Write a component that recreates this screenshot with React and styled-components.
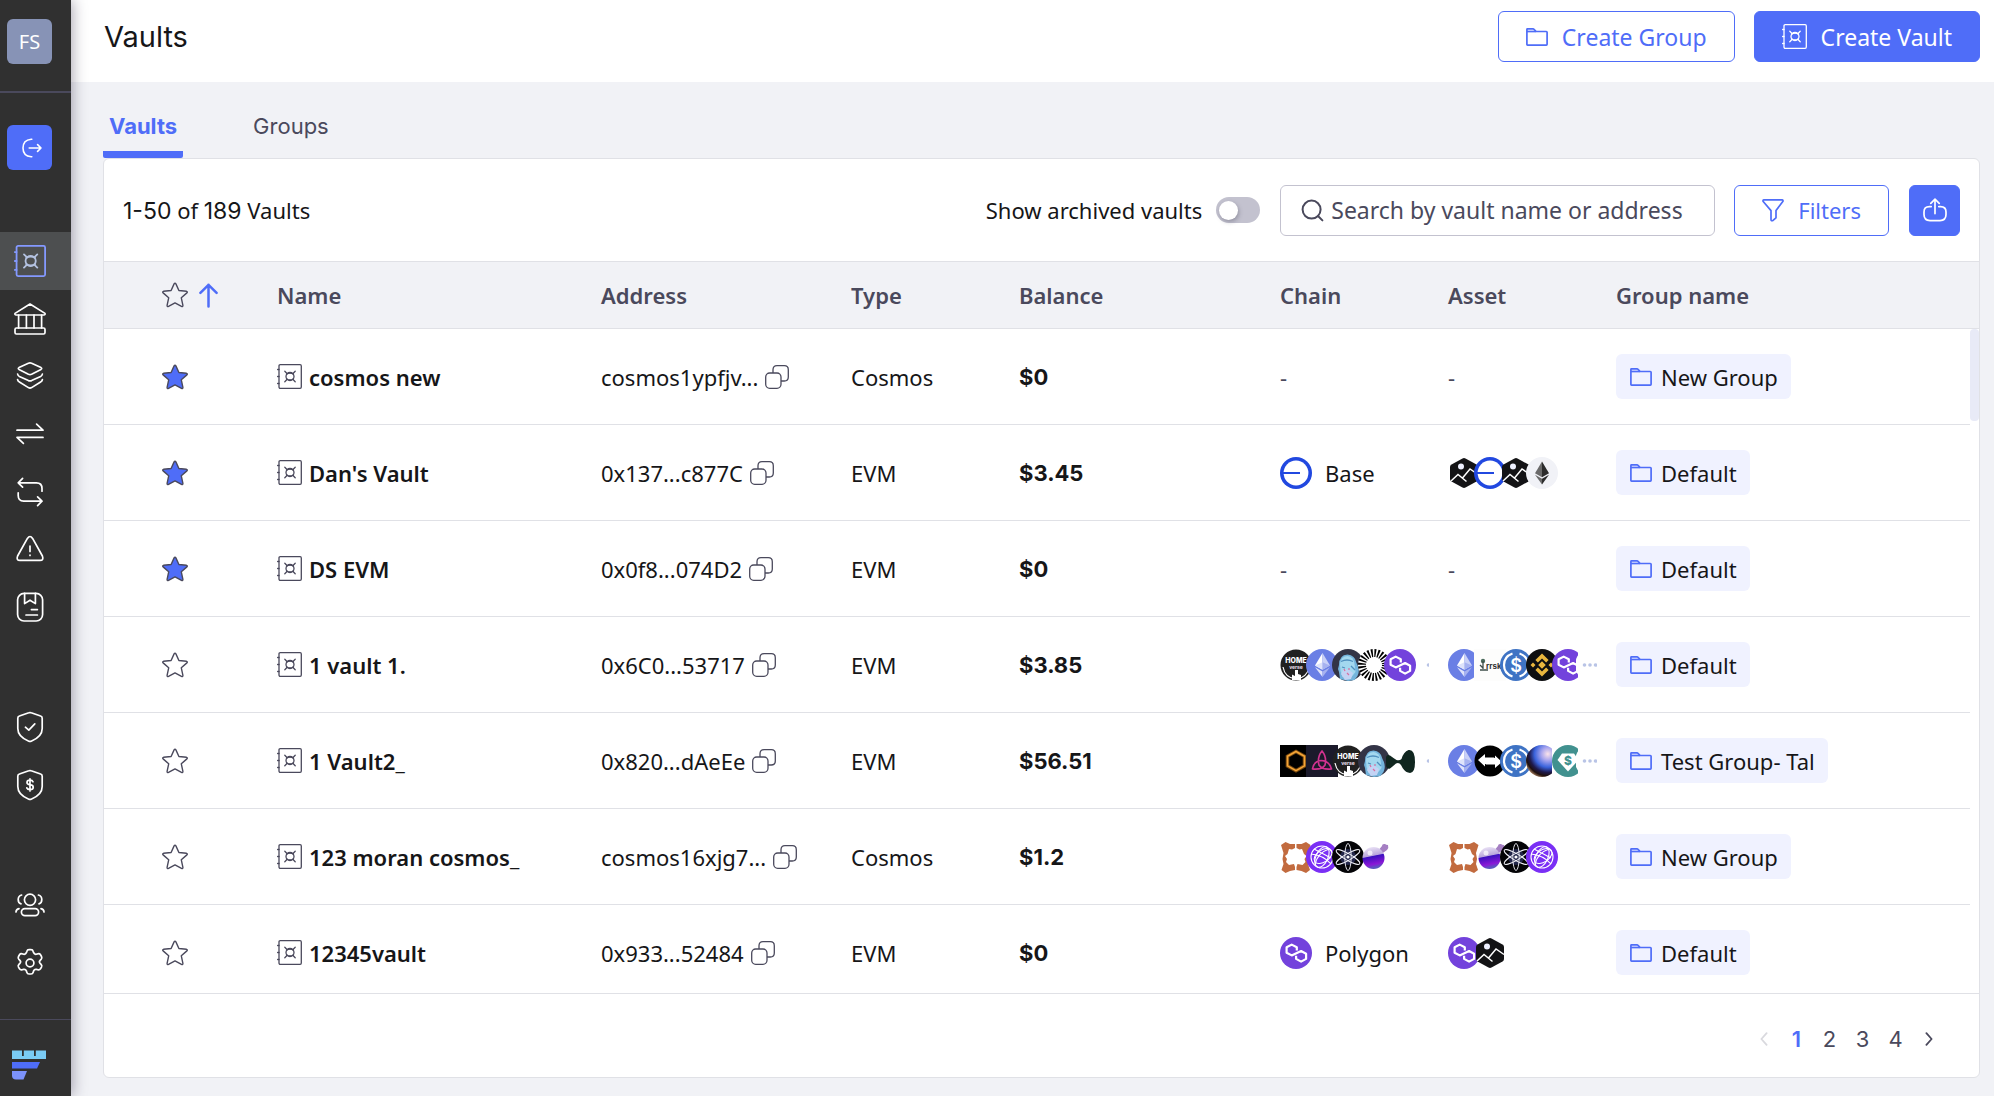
import React from 'react';
import styled, { createGlobalStyle, css } from 'styled-components';

const COLORS = {
  primary: '#4f6df8',
  text: '#161618',
  muted: '#4a495c',
  line: '#e0e1e6',
  page: '#f1f2f6',
  dark: '#303030',
};

const TEXT_FONT = `'Noto Sans', 'Open Sans', sans-serif`;
const NUMBER_FONT = `Inter, 'Noto Sans', sans-serif`;

/* ---------- interface icons ---------- */

const VaultIcon = ({ size = 25, stroke = 1.3, inner }) => (
  <svg width={size} height={size} viewBox="0 0 25 25" fill="none" stroke="currentColor" strokeWidth={stroke} strokeLinecap="round">
    <rect x="2" y="0.7" width="22.3" height="23.6" rx="1.2" />
    <path d="M0.6 5.5H2M0.6 12.5H2M0.6 19.5H2" />
    <g stroke={inner || 'currentColor'}>
      <circle cx="13" cy="12.5" r="4" />
      <path d="M7.8 7.3l2.4 2.4M18.2 7.3l-2.4 2.4M7.8 17.7l2.4-2.4M18.2 17.7l-2.4-2.4" />
      <path d="M9.6 10Q13 8 16.4 10M9.6 15Q13 17 16.4 15" />
    </g>
  </svg>
);

const StarIcon = ({ filled }) => (
  <svg width="26" height="26" viewBox="0 0 26 26" fill={filled ? COLORS.primary : 'none'} stroke={COLORS.muted} strokeWidth="1.4" strokeLinejoin="round">
    <path d="M12.1 1.9q.9-1.6 1.8 0l3 6.6 7.6.8q1.4.4.4 1.6l-5.6 4.9 1.6 7.6q0 1.6-1.4 1L13 20.9l-6.5 3.5q-1.4.6-1.4-1l1.6-7.6-5.6-4.9q-1-1.2.4-1.6l7.6-.8z" />
  </svg>
);

const FolderIcon = () => (
  <svg width="22" height="18" viewBox="0 0 22 18" fill="none" stroke={COLORS.primary} strokeWidth="1.7" strokeLinejoin="round">
    <path d="M.9 16.600V1.400q0-.5.5-.5h5.700q.5 0 .9.4l2.200 2.200h10.100q.8 0 .8.700v12q0 .9-.8.9H1.500q-.6 0-.6-.5z" />
    <path d="M1 3.500h9" />
  </svg>
);

const CopyIcon = () => (
  <svg width="24" height="24" viewBox="0 0 24 24" fill="none" stroke={COLORS.muted} strokeWidth="1.3">
    <rect x="0.7" y="8" width="15.3" height="15.3" rx="4" />
    <path d="M8 8V4.7q0-4 4-4h7.3q4 0 4 4V12q0 4-4 4H16" />
  </svg>
);

const SearchIcon = () => (
  <svg width="23" height="23" viewBox="0 0 23 23" fill="none" stroke={COLORS.muted} strokeWidth="2" strokeLinecap="round">
    <circle cx="10.6" cy="10.6" r="9" />
    <path d="M17 17l4.4 4.4" />
  </svg>
);

const FunnelIcon = () => (
  <svg width="22" height="23" viewBox="0 0 22 23" fill="none" stroke="currentColor" strokeWidth="1.7" strokeLinejoin="round">
    <path d="M1 2.2V1.6q0-.7.7-.7h18.6q.7 0 .7.7v.6L14 11.6v7.2l-3 2.6q-2 1-2-.8v-9L1 2.2z" />
  </svg>
);

const ExportIcon = () => (
  <svg width="24" height="24" viewBox="0 0 24 24" fill="none" stroke="currentColor" strokeWidth="1.7" strokeLinecap="round" strokeLinejoin="round">
    <path d="M8.2 8.6H6.4Q1 8.6 1 14v2.6q0 6 6 6h10q6 0 6-6V14q0-5.4-5.4-5.4h-1.8" />
    <path d="M12 15.6V1.4M7.8 5.4L12 1.2l4.2 4.2" />
  </svg>
);

const ArrowUpIcon = () => (
  <svg width="19" height="25" viewBox="0 0 19 25" fill="none" stroke={COLORS.primary} strokeWidth="2.5" strokeLinecap="round" strokeLinejoin="round">
    <path d="M9.5 23.5V1.8M1.4 9.8l8.1-8 8.1 8" />
  </svg>
);

const Chevron = ({ right }) => (
  <svg width="8" height="14" viewBox="0 0 8 14" fill="none" stroke="currentColor" strokeWidth="1.8" strokeLinecap="round" strokeLinejoin="round">
    <path d={right ? 'M1.4 1.2L6.6 7l-5.2 5.8' : 'M6.6 1.2L1.4 7l5.2 5.8'} />
  </svg>
);

const SideIcon = ({ children }) => (
  <svg width="32" height="32" viewBox="0 0 32 32" fill="none" stroke="currentColor" strokeWidth="1.7" strokeLinecap="round" strokeLinejoin="round">
    {children}
  </svg>
);

const ExitIcon = () => (
  <svg width="20" height="20" viewBox="0 0 20 20" fill="none" stroke="currentColor" strokeWidth="1.6" strokeLinecap="round" strokeLinejoin="round">
    <path d="M9.8 1.2h-.6Q1 2 1 10t8.2 8.8h.6M7.2 10H19M15.6 6.6L19 10l-3.4 3.4" />
  </svg>
);

const BankIcon = () => (
  <SideIcon>
    <path d="M16 1L1 10.4q-.3 1.6 1 1.6h28q1.3 0 1-1.6z" />
    <path d="M4.6 12v13M12.4 12v13M20 12v13M27.6 12v13" />
    <rect x="1" y="25" width="30" height="6" rx="1.4" />
  </SideIcon>
);

const LayersIcon = () => (
  <SideIcon>
    <path d="M14.4 3.2q1.6-.7 3.2 0l9.4 4.4q1.4.9 0 1.8l-9.4 4.8q-1.6.7-3.2 0L5 9.4q-1.4-.9 0-1.8z" />
    <path d="M3.6 14q.2 1.6 1.8 2.4l9 4.2q1.6.7 3.2 0l9-4.2q1.6-.8 1.8-2.4" />
    <path d="M3.6 19.6q.2 1.6 1.8 2.4l9 5.6q1.6.9 3.2 0l9-5.6q1.6-.8 1.8-2.4" />
  </SideIcon>
);

const SwapIcon = () => (
  <SideIcon>
    <path d="M3 12.2h26L22.6 6.2M29 19.4H3l6.4 6" />
  </SideIcon>
);

const LoopIcon = () => (
  <SideIcon>
    <path d="M8.6 2.4L4.2 6.8l4.4 4.4M4.2 6.8h18.2q5.6 0 5.6 5.6v2.8" />
    <path d="M23.6 20.8l4.4 4.4-4.4 4.4M28 25.2H9.6Q4.2 25.2 4.2 19.6v-2.8" />
  </SideIcon>
);

const WarningIcon = () => (
  <SideIcon>
    <path d="M13.4 5.4q2.6-3.8 5.2 0l9.8 17.6q1.6 4.4-2.4 4.4H6q-4 0-2.4-4.4z" />
    <path d="M16 13v5.4M16 22v.4" />
  </SideIcon>
);

const BookIcon = () => (
  <SideIcon>
    <rect x="3.6" y="2.4" width="25" height="27.6" rx="6.4" />
    <path d="M10.6 2.4v10.2l5.4-3.4 5.4 3.4V2.4M17.4 18.6h6M12 24h11.4" />
  </SideIcon>
);

const SHIELD = 'M14.8 1.8q1.2-.5 2.4 0l9.4 3.2q1.6.5 1.6 2.2v10.4q0 8.4-11 12.6-1.2.5-2.4 0-11-4.2-11-12.6V7.2q0-1.7 1.6-2.2z';

const ShieldCheckIcon = () => (
  <SideIcon>
    <path d={SHIELD} />
    <path d="M11.4 16.2l3.4 3 6-6.4" />
  </SideIcon>
);

const ShieldDollarIcon = () => (
  <SideIcon>
    <path d={SHIELD} />
    <path d="M19 12.8q-.6-1.600-3-1.600-3 0-3 2.200 0 1.900 3 2.300 3.200.4 3.200 2.500 0 2.400-3.200 2.400-2.600 0-3.200-1.700M16 9.8v12.2" />
  </SideIcon>
);

const PeopleIcon = () => (
  <SideIcon>
    <circle cx="16" cy="10.8" r="5.6" />
    <rect x="7.4" y="19.6" width="17.2" height="7" rx="3.5" />
    <path d="M7.6 6q-3.4 1-3.4 4.6t2.8 4.2M24.4 6q3.4 1 3.4 4.6T25 14.8M5 19.6q-3 .6-3 3.4M27 19.6q3 .6 3 3.4" />
  </SideIcon>
);

const GearIcon = () => (
  <SideIcon>
    <circle cx="16" cy="16" r="3.9" />
    <path d="M12.8 4.4q.5-1.8 2.2-1.8h2q1.7 0 2.2 1.8l.4 1.3q.8 1.9 2.8 1.5l1.5-.4q1.7-.4 2.6 1l1 1.7q.8 1.5-.4 2.8l-1 1q-1.4 1.5 0 3l1 1q1.2 1.3.4 2.8l-1 1.7q-.9 1.4-2.6 1l-1.5-.4q-2-.4-2.8 1.5l-.4 1.3q-.5 1.8-2.2 1.8h-2q-1.7 0-2.2-1.8l-.4-1.3q-.8-1.9-2.8-1.5l-1.5.4q-1.7.4-2.6-1l-1-1.7q-.8-1.5.4-2.8l1-1q1.4-1.5 0-3l-1-1q-1.2-1.3-.4-2.8l1-1.7q.9-1.4 2.6-1l1.5.4q2 .4 2.8-1.5z" />
  </SideIcon>
);

const BrandLogo = () => (
  <svg width="34" height="30" viewBox="0 0 34 30">
    <path d="M0 .5h10v5.500h1.800V.5h10.200v5.500h1.800V.5H34v8.500H0z" fill="#7accf5" />
    <path d="M0 12h28l-3 6.500H0z" fill="#4f6df8" />
    <path d="M0 21h15l-3.500 8.500H4Q0 29.500 0 25.500z" fill="#7c92fb" />
  </svg>
);

/* ---------- token icons, all drawn in a 32 box ---------- */

const TOKENS = {
  base: (
    <>
      <circle cx="16" cy="16" r="16" fill="#2148e0" />
      <circle cx="16" cy="16" r="12.4" fill="#fff" />
      <path d="M2 16h18" stroke="#2148e0" strokeWidth="2" />
    </>
  ),
  image: (
    <>
      <path d="M14.5 1.5q1.5-.8 3 0l11 6q1.5.9 1.5 2.5v12q0 1.6-1.5 2.5l-11 6q-1.500.8-3 0l-11-6Q2 23.600 2 22V10q0-1.600 1.500-2.500z" fill="#131315" />
      <circle cx="13" cy="9.5" r="3" fill="#eef0ff" />
      <path d="M3 24l7-6.5 8.5 7M14.5 21L22 12l8 5.5" fill="none" stroke="#fff" strokeWidth="1.5" />
    </>
  ),
  ethLight: (
    <>
      <circle cx="16" cy="16" r="16" fill="#f1f2f7" />
      <path d="M16 4.5L9 16.200l7 4z" fill="#6a6a6a" />
      <path d="M16 4.5l7 11.700-7 4z" fill="#2c2c2c" />
      <path d="M9 17.8l7 9.700v-5.700z" fill="#6a6a6a" />
      <path d="M23 17.8l-7 9.700v-5.700z" fill="#2c2c2c" />
    </>
  ),
  eth: (
    <>
      <circle cx="16" cy="16" r="16" fill="#6a7fe5" />
      <path d="M16.5 4L9 16.500l7.500 4.300z" fill="#fff" />
      <path d="M16.5 4L24 16.500l-7.500 4.300z" fill="#c9d1f7" />
      <path d="M9 16.5l7.500-3.300v7.600zM9 18.200l7.500 9.800v-5.600z" fill="#dfe4fb" />
      <path d="M24 16.5l-7.500-3.300v7.600zM24 18.200L16.500 28v-5.600z" fill="#a6b2f0" />
    </>
  ),
  home: (
    <>
      <circle cx="16" cy="16" r="15.5" fill="#202020" />
      <path d="M3 18q2 11 13 12 11-1 13-12" fill="none" stroke="#fff" strokeWidth="1.2" />
      <text x="16" y="14" fontSize="7" fontWeight="800" fill="#fff" textAnchor="middle" fontFamily="Inter, sans-serif">HOME</text>
      <text x="16" y="20" fontSize="5" fontWeight="700" fill="#e6dce8" textAnchor="middle" fontFamily="Inter, sans-serif">verse</text>
      <path d="M15 21v6l-3-1.500V31h9v-5l-3-1v-4z" fill="#fff" />
    </>
  ),
  penguin: (
    <>
      <circle cx="16" cy="16" r="16" fill="#333446" />
      <path d="M7 16q0-10 8.500-10.500Q23 6 24.500 14q4 7 1 13l-3 4-6.500 1-8-2-1-7-1-3z" fill="#74b4dc" />
      <path d="M8 15q1-8 7.500-8 6 .5 7 8l1 8-4 5h-9l-2-6z" fill="#a3d8ef" />
      <path d="M9 12.500q6-3 12 0M19 17l4 4M10 18l3 1" stroke="#4f8fbe" strokeWidth="1.300" fill="none" />
      <path d="M12 20l-3 5 4 6 6-1 2-6-4-3z" fill="#c3d3f4" />
      <path d="M12 20l1 2M15 24l2 2M17 19v2" stroke="#d76fa0" strokeWidth="1.200" />
    </>
  ),
  burst: (
    <>
      <circle cx="16" cy="16" r="16" fill="#fff" />
      <circle cx="16" cy="16" r="12" fill="none" stroke="#000" strokeWidth="8" strokeDasharray="1.642 1.5" />
    </>
  ),
  polygon: (
    <>
      <circle cx="16" cy="16" r="16" fill="#7342dc" />
      <path d="M16.8 13.5v-3.200l-5.100-2.700-5.100 2.700v5.400l5.100 2.700 9.400-4.400 5 2.700v5.200l-5 2.700-5-2.700v-3.200" fill="none" stroke="#fff" strokeWidth="2.2" strokeLinejoin="round" />
    </>
  ),
  rrsk: (
    <>
      <rect width="32" height="32" fill="#fdfdfc" />
      <circle cx="9" cy="12" r="2.2" fill="#4b6b5c" />
      <path d="M9 12v8M6 16l3 3M6 21h8" stroke="#3f4f49" strokeWidth="1.3" fill="none" />
      <text x="12" y="20" fontSize="8" fontWeight="700" fill="#333" fontFamily="Inter, sans-serif">rrsk</text>
    </>
  ),
  usdc: (
    <>
      <circle cx="16" cy="16" r="16" fill="#3e73c4" />
      <path d="M12.5 4.5Q4 7.500 4 16t8.500 11.500M19.500 4.500Q28 7.500 28 16t-8.500 11.500" fill="none" stroke="#fff" strokeWidth="2.2" />
      <text x="16" y="22.5" fontSize="18" fontWeight="600" fill="#fff" textAnchor="middle" fontFamily="Inter, sans-serif">$</text>
    </>
  ),
  bnb: (
    <>
      <circle cx="16" cy="16" r="16" fill="#0e0f11" />
      <path d="M16 4.5l6.600 6.600-2.500 2.500-4.100-4.100-4.100 4.100-2.500-2.500zM16 27.500l6.600-6.600-2.500-2.500-4.100 4.100-4.100-4.100-2.500 2.500zM7 13.500L9.500 16 7 18.500 4.500 16zM25 13.500l2.500 2.500-2.500 2.500-2.500-2.500zM16 12.200l3.800 3.800-3.800 3.800-3.800-3.800z" fill="#e8b63e" />
    </>
  ),
  hexOrange: (
    <>
      <rect width="32" height="32" fill="#000" />
      <path d="M16 6.5l8.500 4.800v9.600L16 25.700l-8.500-4.800v-9.600z" fill="none" stroke="#7a4a10" strokeWidth="3.6" />
      <path d="M16 6.5l8.500 4.800v9.600L16 25.700l-8.500-4.800v-9.600z" fill="none" stroke="#f4a537" strokeWidth="1.6" />
    </>
  ),
  knot: (
    <>
      <rect width="32" height="32" fill="#1b1a2b" />
      <path d="M16 6q5 6 3 14-3 5-12.500 4 1.500-8 8.500-8.500 8 0 10.500 8.500-9.500 1-12.500-4-2-8 3-14z" fill="none" stroke="#d1328f" strokeWidth="1.7" strokeLinejoin="round" />
    </>
  ),
  bowtie: (
    <path d="M2 12q1-3 4-1.500 4 3 6.500 4.500 3 1 5-1 2-7 7-9 6.500-1 6.500 12t-7 10.500q-4-1-7-7.500-2-3-5-1.500-4 3.500-6 5-3 1-4-2.500z" fill="#10261f" />
  ),
  zed: (
    <>
      <circle cx="16" cy="16" r="15.5" fill="#000" />
      <path d="M4 15l7-6v3.500h9.500L13 19h-2v2.500zM28 17l-7 6v-3.500h-9.500L19 13h2v-2.500z" fill="#fff" />
    </>
  ),
  planet: (
    <>
      <defs>
        <radialGradient id="planet" cx="0.68" cy="0.28" r="0.8">
          <stop offset="0" stopColor="#fbe3ea" />
          <stop offset="0.25" stopColor="#a9a6ee" />
          <stop offset="0.52" stopColor="#3a63dc" />
          <stop offset="0.72" stopColor="#1f1a4c" />
          <stop offset="0.86" stopColor="#20100e" />
          <stop offset="1" stopColor="#b98d6a" />
        </radialGradient>
      </defs>
      <circle cx="16" cy="16" r="16" fill="url(#planet)" />
    </>
  ),
  gem: (
    <>
      <rect width="32" height="32" fill="#fff" />
      <circle cx="16" cy="16" r="16" fill="#41918f" />
      <path d="M10 8.5h12L26.500 15 16 26.500 5.500 15z" fill="#fff" />
      <text x="16" y="20" fontSize="12" fontWeight="800" fill="#41918f" textAnchor="middle" fontFamily="Inter, sans-serif">$</text>
    </>
  ),
  frame: (
    <path
      d="M1 4l4.500-3L10 3h5v4l-3 1.500L9 8l-1.500 5-2.500 2 2 3-1 3 3 3 5-1 1 3v3l-5 1-4.500 2-4-3 2-6-1-5 1-6zM30.500 4L26 1l-4.500 2h-5v4l3 1.500L22 8l2 5 2.500 2-2 3 1 3-3 3-5-1-1 3v3l5 1 4.500 2 4-3-2-6 1-5-1-6z"
      fill="#c26b3f"
    />
  ),
  orbit: (
    <>
      <circle cx="16" cy="16" r="16" fill="#7a2ff5" />
      <g fill="none" stroke="#fff" strokeWidth="1.1">
        <circle cx="16" cy="16" r="11" />
        <ellipse cx="17" cy="15" rx="10" ry="6" transform="rotate(-35 17 15)" />
        <ellipse cx="16" cy="16" rx="6" ry="11" transform="rotate(25 16 16)" />
        <path d="M5 13q12 1 20 10M9 24q2-12 14-16M8 8l17 9" />
      </g>
    </>
  ),
  atom: (
    <>
      <circle cx="16" cy="16" r="16" fill="#040407" />
      <circle cx="16" cy="16" r="8" fill="#22264a" />
      <g fill="none" stroke="#f4f4fa" strokeWidth="0.9">
        <ellipse cx="16" cy="16" rx="3.2" ry="13.5" />
        <ellipse cx="16" cy="16" rx="3.2" ry="13.5" transform="rotate(60 16 16)" />
        <ellipse cx="16" cy="16" rx="3.2" ry="13.5" transform="rotate(120 16 16)" />
      </g>
      <circle cx="16" cy="16" r="1.6" fill="#fff" />
    </>
  ),
  flask: (
    <>
      <defs>
        <linearGradient id="flask" x1="0" y1="0" x2="0.2" y2="1">
          <stop offset="0" stopColor="#f3eefa" />
          <stop offset="0.46" stopColor="#b9a5dc" />
          <stop offset="0.5" stopColor="#3c10c0" />
          <stop offset="0.85" stopColor="#8a18d6" />
          <stop offset="1" stopColor="#5a55c0" />
        </linearGradient>
      </defs>
      <path d="M19 11l5-6q0-2.500 3-2 1 1 3 1 1 3-1 5l-7 5z" fill="#a57fc3" />
      <circle cx="15.5" cy="17" r="11" fill="url(#flask)" />
      <circle cx="12" cy="12" r="2.5" fill="#fff" opacity="0.7" />
    </>
  ),
  more: (
    <>
      <path d="M2 0h30v32H2z" fill="#fff" />
      <circle cx="16" cy="16" r="17" fill="#fff" />
      <g fill="#b9c4e6">
        <circle cx="8.500" cy="16" r="1.8" />
        <circle cx="14" cy="16" r="1.8" />
        <circle cx="19.500" cy="16" r="1.8" />
      </g>
    </>
  ),
};

const Token = ({ name }) => (
  <TokenSvg viewBox="0 0 32 32" role="img" aria-label={name}>
    {TOKENS[name]}
  </TokenSvg>
);

/* ---------- data ---------- */

const NAV_MAIN = [
  { label: 'Vaults', active: true, icon: <VaultIcon size={32} stroke={1.4} inner="#b3c1e0" /> },
  { label: 'Treasury', icon: <BankIcon /> },
  { label: 'Staking', icon: <LayersIcon /> },
  { label: 'Transfers', icon: <SwapIcon /> },
  { label: 'Swaps', icon: <LoopIcon /> },
  { label: 'Alerts', icon: <WarningIcon /> },
  { label: 'Address book', icon: <BookIcon /> },
];

const NAV_POLICY = [
  { label: 'Policies', icon: <ShieldCheckIcon /> },
  { label: 'Insurance', icon: <ShieldDollarIcon /> },
];

const NAV_ADMIN = [
  { label: 'Users', icon: <PeopleIcon /> },
  { label: 'Settings', icon: <GearIcon /> },
];

const VAULTS = [
  { name: 'cosmos new', address: 'cosmos1ypfjv...', type: 'Cosmos', balance: '$0', group: 'New Group', starred: true, chains: [], assets: [] },
  { name: "Dan's Vault", address: '0x137...c877C', type: 'EVM', balance: '$3.45', group: 'Default', starred: true, chains: ['base'], chainLabel: 'Base', assets: ['image', 'base', 'image', 'ethLight'] },
  { name: 'DS EVM', address: '0x0f8...074D2', type: 'EVM', balance: '$0', group: 'Default', starred: true, chains: [], assets: [] },
  { name: '1 vault 1.', address: '0x6C0...53717', type: 'EVM', balance: '$3.85', group: 'Default', chains: ['home', 'eth', 'penguin', 'burst', 'polygon'], assets: ['eth', 'rrsk', 'usdc', 'bnb', 'polygon'], more: true },
  { name: '1 Vault2_', address: '0x820...dAeEe', type: 'EVM', balance: '$56.51', group: 'Test Group- Tal', chains: ['hexOrange', 'knot', 'home', 'penguin', 'bowtie'], assets: ['eth', 'zed', 'usdc', 'planet', 'gem'], more: true },
  { name: '123 moran cosmos_', address: 'cosmos16xjg7...', type: 'Cosmos', balance: '$1.2', group: 'New Group', chains: ['frame', 'orbit', 'atom', 'flask'], assets: ['frame', 'flask', 'atom', 'orbit'] },
  { name: '12345vault', address: '0x933...52484', type: 'EVM', balance: '$0', group: 'Default', chains: ['polygon'], chainLabel: 'Polygon', assets: ['polygon', 'image'] },
];

const PAGES = [1, 2, 3, 4];

/* ---------- components ---------- */

const NavGroup = ({ items }) => (
  <NavList>
    {items.map(item => (
      <NavItem key={item.label}>
        <NavLink href="#" $active={item.active} aria-label={item.label}>
          {item.icon}
        </NavLink>
      </NavItem>
    ))}
  </NavList>
);

const TokenStack = ({ tokens, label, more, loose }) => {
  if (!tokens.length) return <Dash>-</Dash>;
  return (
    <Stack>
      {tokens.map((name, index) => (
        <Token key={index} name={name} />
      ))}
      {more && (
        <MoreTokens $loose={loose}>
          <Token name="more" />
        </MoreTokens>
      )}
      {label && <StackLabel>{label}</StackLabel>}
    </Stack>
  );
};

const VaultRow = ({ vault }) => (
  <tr>
    <StarCell>
      <IconButton aria-label={`Star ${vault.name}`}>
        <StarIcon filled={vault.starred} />
      </IconButton>
    </StarCell>
    <Cell>
      <VaultName>
        <VaultIcon />
        {vault.name}
      </VaultName>
    </Cell>
    <Cell>
      <Address>
        {vault.address}
        <IconButton aria-label="Copy address">
          <CopyIcon />
        </IconButton>
      </Address>
    </Cell>
    <Cell>{vault.type}</Cell>
    <Cell>
      <Balance>{vault.balance}</Balance>
    </Cell>
    <Cell>
      <TokenStack tokens={vault.chains} label={vault.chainLabel} more={vault.more} loose />
    </Cell>
    <Cell>
      <TokenStack tokens={vault.assets} more={vault.more} />
    </Cell>
    <Cell>
      <GroupChip>
        <FolderIcon />
        {vault.group}
      </GroupChip>
    </Cell>
    <td />
  </tr>
);

const App = () => {
  return (
    <>
      <GlobalStyle />
      <Shell>
        <Sidebar>
          <AvatarBox>
            <Avatar>FS</Avatar>
          </AvatarBox>
          <ExitBox>
            <ExitButton aria-label="Switch workspace">
              <ExitIcon />
            </ExitButton>
          </ExitBox>
          <Nav>
            <NavGroup items={NAV_MAIN} />
            <NavGroup items={NAV_POLICY} />
            <NavGroup items={NAV_ADMIN} />
          </Nav>
          <LogoBox>
            <BrandLogo />
          </LogoBox>
        </Sidebar>

        <Main>
          <Header>
            <Title>Vaults</Title>
            <HeaderActions>
              <Button>
                <FolderIcon />
                Create Group
              </Button>
              <Button $solid>
                <VaultIcon />
                Create Vault
              </Button>
            </HeaderActions>
          </Header>

          <Content>
            <Tabs>
              <Tab $active>Vaults</Tab>
              <Tab>Groups</Tab>
            </Tabs>

            <Card>
              <Toolbar>
                <Count>
                  <Num>1-50</Num> of <Num>189</Num> Vaults
                </Count>
                <ToggleLabel>
                  Show archived vaults
                  <Toggle type="checkbox" />
                </ToggleLabel>
                <SearchBox>
                  <SearchIcon />
                  <SearchInput aria-label="Search vaults" placeholder="Search by vault name or address" />
                </SearchBox>
                <FilterButton>
                  <FunnelIcon />
                  Filters
                </FilterButton>
                <ExportButton aria-label="Export">
                  <ExportIcon />
                </ExportButton>
              </Toolbar>

              <TableArea>
                <Table>
                  <colgroup>
                    <Col $width={173} />
                    <Col $width={324} />
                    <Col $width={250} />
                    <Col $width={168} />
                    <Col $width={261} />
                    <Col $width={168} />
                    <Col $width={168} />
                    <col />
                    <Col $width={9} />
                  </colgroup>
                  <thead>
                    <tr>
                      <HeadCell>
                        <SortHead>
                          <StarIcon />
                          <ArrowUpIcon />
                        </SortHead>
                      </HeadCell>
                      <HeadCell>Name</HeadCell>
                      <HeadCell>Address</HeadCell>
                      <HeadCell>Type</HeadCell>
                      <HeadCell>Balance</HeadCell>
                      <HeadCell>Chain</HeadCell>
                      <HeadCell>Asset</HeadCell>
                      <HeadCell colSpan={2}>Group name</HeadCell>
                    </tr>
                  </thead>
                  <tbody>
                    {VAULTS.map(vault => (
                      <VaultRow key={vault.name} vault={vault} />
                    ))}
                  </tbody>
                </Table>
                <ScrollThumb />
              </TableArea>

              <Pagination aria-label="Pages">
                <PageButton disabled aria-label="Previous page">
                  <Chevron />
                </PageButton>
                {PAGES.map(page => (
                  <PageButton key={page} $current={page === 1}>
                    {page}
                  </PageButton>
                ))}
                <PageButton aria-label="Next page">
                  <Chevron right />
                </PageButton>
              </Pagination>
            </Card>
          </Content>
        </Main>
      </Shell>
    </>
  );
};

export default App;

/* ---------- styles ---------- */

const GlobalStyle = createGlobalStyle`
  * {
    box-sizing: border-box;
  }

  body {
    margin: 0;
    color: ${COLORS.text};
    background: ${COLORS.page};
    font-family: ${TEXT_FONT};
    font-size: 22px;
    line-height: 30px;
  }

  button,
  input {
    font: inherit;
  }

  svg {
    display: block;
    flex-shrink: 0;
  }
`;

const Shell = styled.div`
  display: flex;
  height: 100vh;
  overflow: hidden;
`;

const Sidebar = styled.aside`
  position: relative;
  z-index: 2;
  display: flex;
  flex-direction: column;
  flex-shrink: 0;
  width: 71px;
  color: #fff;
  background: ${COLORS.dark};
  box-shadow: 1px 0 14px rgba(30, 20, 50, 0.4);
`;

const AvatarBox = styled.div`
  height: 93px;
  padding: 19px 7px;
  border-bottom: 2px solid #4a495c;
`;

const tile = css`
  display: flex;
  align-items: center;
  justify-content: center;
  width: 45px;
  height: 45px;
  border-radius: 6px;
`;

const Avatar = styled.div`
  ${tile}
  color: #fff;
  font-size: 20px;
  background: #8793b6;
`;

const ExitBox = styled.div`
  padding: 32px 7px 62px;
`;

const ExitButton = styled.button`
  ${tile}
  padding: 0 0 0 4px;
  border: 0;
  color: #fff;
  background: ${COLORS.primary};
`;

const Nav = styled.nav`
  display: flex;
  flex: 1;
  flex-direction: column;
  gap: 62px;
`;

const NavList = styled.ul`
  margin: 0;
  padding: 0;
  list-style: none;
`;

const NavItem = styled.li`
  &:nth-child(3n) {
    margin-top: -1px;
  }
`;

const NavLink = styled.a`
  display: flex;
  align-items: center;
  height: 58px;
  padding-left: 14px;
  color: ${props => (props.$active ? '#8499ff' : '#fff')};
  background: ${props => (props.$active ? '#4d4f50' : 'transparent')};
`;

const LogoBox = styled.div`
  height: 77px;
  padding: 30px 12px;
  border-top: 1px solid #4a495c;
`;

const Main = styled.main`
  display: flex;
  flex: 1;
  flex-direction: column;
  min-width: 0;
`;

const Header = styled.header`
  display: flex;
  justify-content: space-between;
  height: 82px;
  padding: 11px 14px 0 33px;
  background: #fff;
`;

const Title = styled.h1`
  margin: 0;
  font-family: ${NUMBER_FONT};
  font-size: 29px;
  font-weight: 400;
  line-height: 51px;
`;

const HeaderActions = styled.div`
  display: flex;
  gap: 19px;
`;

const Button = styled.button`
  display: flex;
  align-items: center;
  gap: 14px;
  height: 51px;
  padding: 0 27px;
  border: 1px solid ${COLORS.primary};
  border-radius: 6px;
  color: ${props => (props.$solid ? '#fff' : COLORS.primary)};
  font-size: 23px;
  background: ${props => (props.$solid ? COLORS.primary : '#fff')};
`;

const Content = styled.div`
  display: flex;
  flex: 1;
  flex-direction: column;
  min-height: 0;
  padding: 0 14px 18px 32px;
`;

const Tabs = styled.div`
  display: flex;
  gap: 64px;
  height: 76px;
`;

const Tab = styled.button`
  padding: 18px 6px 0;
  border: 0;
  border-bottom: 7px solid ${props => (props.$active ? COLORS.primary : 'transparent')};
  border-radius: 2px;
  color: ${props => (props.$active ? COLORS.primary : COLORS.muted)};
  font-family: ${NUMBER_FONT};
  font-weight: ${props => (props.$active ? 700 : 400)};
  background: none;
`;

const Card = styled.section`
  display: flex;
  flex: 1;
  flex-direction: column;
  min-height: 0;
  border: 1px solid ${COLORS.line};
  border-radius: 6px;
  overflow: hidden;
  background: #fff;
`;

const Toolbar = styled.div`
  display: flex;
  align-items: center;
  height: 103px;
  padding: 0 19px;
  border-bottom: 1px solid ${COLORS.line};
`;

const Count = styled.div`
  margin-right: auto;
`;

const Num = styled.span`
  font-family: ${NUMBER_FONT};
  font-size: 23px;
`;

const ToggleLabel = styled.label`
  display: flex;
  align-items: center;
  gap: 14px;
`;

const Toggle = styled.input`
  appearance: none;
  display: flex;
  align-items: center;
  width: 44px;
  height: 26px;
  margin: 0;
  padding: 0 3px;
  border-radius: 13px;
  background: #c3c2cf;

  &::before {
    content: '';
    width: 19px;
    height: 19px;
    border-radius: 50%;
    background: #fff;
    box-shadow: 1px 2px 4px rgba(60, 60, 80, 0.35);
  }
`;

const SearchBox = styled.label`
  display: flex;
  align-items: center;
  gap: 7px;
  width: 435px;
  height: 51px;
  margin-left: 20px;
  padding: 0 20px;
  border: 1px solid #c3c2cf;
  border-radius: 6px;
`;

const SearchInput = styled.input`
  flex: 1;
  min-width: 0;
  padding: 0;
  border: 0;
  outline: 0;
  color: ${COLORS.muted};
  font-size: 23px;
  background: none;

  &::placeholder {
    color: ${COLORS.muted};
    opacity: 1;
  }
`;

const FilterButton = styled(Button)`
  margin-left: 19px;
  font-size: 22px;
`;

const ExportButton = styled(Button)`
  justify-content: center;
  width: 51px;
  margin-left: 20px;
  padding: 0;
  color: #fff;
  background: ${COLORS.primary};
`;

const TableArea = styled.div`
  position: relative;
  flex: 1;
  min-height: 0;
  overflow: hidden;
`;

const Table = styled.table`
  width: 100%;
  table-layout: fixed;
  border-collapse: separate;
  border-spacing: 0;
`;

const Col = styled.col`
  width: ${props => props.$width}px;
`;

const HeadCell = styled.th`
  height: 67px;
  padding: 0;
  border-bottom: 1px solid ${COLORS.line};
  color: ${COLORS.muted};
  font-weight: 600;
  text-align: left;
  background: ${COLORS.page};
`;

const SortHead = styled.div`
  display: flex;
  align-items: center;
  gap: 11px;
  padding-left: 58px;
`;

const Cell = styled.td`
  height: 96px;
  padding: 0;
  border-bottom: 1px solid ${COLORS.line};
  white-space: nowrap;
`;

const StarCell = styled(Cell)`
  padding-left: 58px;
`;

const IconButton = styled.button`
  display: flex;
  padding: 0;
  border: 0;
  background: none;
`;

const VaultName = styled.div`
  display: flex;
  align-items: center;
  gap: 7px;
  font-weight: 600;

  svg {
    color: ${COLORS.muted};
  }
`;

const Address = styled.div`
  display: flex;
  align-items: center;
  gap: 7px;
`;

const Balance = styled.span`
  font-family: ${NUMBER_FONT};
  font-weight: 700;
`;

const Dash = styled.span`
  color: ${COLORS.muted};
`;

const TokenSvg = styled.svg`
  width: 32px;
  height: 32px;

  & + & {
    margin-left: -6px;
  }
`;

const Stack = styled.div`
  display: flex;
  align-items: center;
  width: 149px;
  overflow: hidden;
`;

const MoreTokens = styled.span`
  margin-left: ${props => (props.$loose ? '4px' : '-8px')};
`;

const StackLabel = styled.span`
  margin-left: 13px;
`;

const GroupChip = styled.div`
  display: inline-flex;
  align-items: center;
  gap: 9px;
  height: 45px;
  padding: 0 13px 0 14px;
  border-radius: 6px;
  vertical-align: middle;
  background: #f0f2ff;
`;

const ScrollThumb = styled.div`
  position: absolute;
  top: 67px;
  right: 0;
  width: 9px;
  height: 92px;
  border-radius: 4px;
  background: #e8eaf7;
`;

const Pagination = styled.nav`
  display: flex;
  align-items: center;
  justify-content: flex-end;
  height: 84px;
  padding: 6px 34px 0 0;
  border-top: 1px solid ${COLORS.line};
`;

const PageButton = styled.button`
  display: flex;
  align-items: center;
  justify-content: center;
  width: 33px;
  height: 33px;
  padding: 0;
  border: 0;
  color: ${props => (props.$current ? COLORS.primary : COLORS.muted)};
  font-family: ${NUMBER_FONT};
  font-weight: ${props => (props.$current ? 600 : 400)};
  background: none;

  &:disabled {
    color: #d9d9de;
  }
`;
